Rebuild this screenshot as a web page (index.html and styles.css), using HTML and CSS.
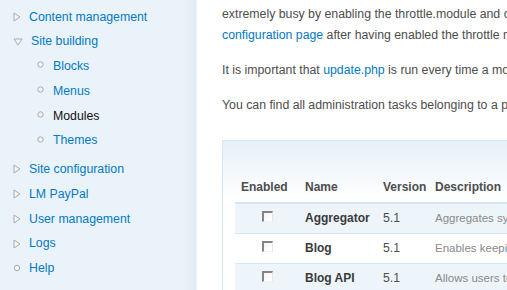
FILE: index.html
```html
<!DOCTYPE html>
<html lang="en">

<head>
    <meta charset="UTF-8">
    <meta name="viewport" content="width=device-width, initial-scale=1.0">
    <link rel="stylesheet" href="styles.css">
</head>

<body>
    <div class="page">
        <aside class="sidebar">
            <ul class="menu">
                <li><a class="item" href="#"><svg class="icon" width="8" height="10" viewBox="0 0 8 10"><polygon points="1,1 7,5 1,9" /></svg>Content management</a></li>
                <li>
                    <a class="item" href="#"><svg class="icon" width="10" height="8" viewBox="0 0 10 8"><polygon points="1,1 9,1 5,7" /></svg>Site building</a>
                    <ul class="menu sub">
                        <li><a class="item" href="#"><svg class="dot" width="7" height="7" viewBox="0 0 7 7"><circle cx="3.5" cy="3.5" r="2.7" /></svg>Blocks</a></li>
                        <li><a class="item" href="#"><svg class="dot" width="7" height="7" viewBox="0 0 7 7"><circle cx="3.5" cy="3.5" r="2.7" /></svg>Menus</a></li>
                        <li><a class="item active" href="#"><svg class="dot" width="7" height="7" viewBox="0 0 7 7"><circle cx="3.5" cy="3.5" r="2.7" /></svg>Modules</a></li>
                        <li><a class="item" href="#"><svg class="dot" width="7" height="7" viewBox="0 0 7 7"><circle cx="3.5" cy="3.5" r="2.7" /></svg>Themes</a></li>
                    </ul>
                </li>
                <li><a class="item" href="#"><svg class="icon" width="8" height="10" viewBox="0 0 8 10"><polygon points="1,1 7,5 1,9" /></svg>Site configuration</a></li>
                <li><a class="item" href="#"><svg class="icon" width="8" height="10" viewBox="0 0 8 10"><polygon points="1,1 7,5 1,9" /></svg>LM PayPal</a></li>
                <li><a class="item" href="#"><svg class="icon" width="8" height="10" viewBox="0 0 8 10"><polygon points="1,1 7,5 1,9" /></svg>User management</a></li>
                <li><a class="item" href="#"><svg class="icon" width="8" height="10" viewBox="0 0 8 10"><polygon points="1,1 7,5 1,9" /></svg>Logs</a></li>
                <li><a class="item" href="#"><svg class="icon" width="8" height="10" viewBox="0 0 8 10"><circle cx="4" cy="5" r="2.7" /></svg>Help</a></li>
            </ul>
        </aside>

        <main class="content">
            <p>Modules can automatically be temporarily disabled to reduce server load when your site becomes<br>
                extremely busy by enabling the throttle.module and checking throttle. The auto-throttle functionality must be configured on the <a href="#">throttle</a><br>
                <a href="#">configuration page</a> after having enabled the throttle module.</p>
            <p>It is important that <a href="#">update.php</a> is run every time a module is updated to a newer version.</p>
            <p>You can find all administration tasks belonging to a particular module on the <a href="#">administration by module page</a>.</p>

            <div class="box">
                <table class="modules">
                    <thead>
                        <tr>
                            <th class="col-enabled">Enabled</th>
                            <th class="col-name">Name</th>
                            <th class="col-version">Version</th>
                            <th>Description</th>
                        </tr>
                    </thead>
                    <tbody>
                        <tr class="odd">
                            <td class="check"><span class="checkbox"></span></td>
                            <td class="name">Aggregator</td>
                            <td>5.1</td>
                            <td class="desc">Aggregates syndicated content (RSS, RDF, and Atom feeds).</td>
                        </tr>
                        <tr class="even">
                            <td class="check"><span class="checkbox"></span></td>
                            <td class="name">Blog</td>
                            <td>5.1</td>
                            <td class="desc">Enables keeping an easily and regularly updated web page or a blog.</td>
                        </tr>
                        <tr class="odd">
                            <td class="check"><span class="checkbox"></span></td>
                            <td class="name">Blog API</td>
                            <td>5.1</td>
                            <td class="desc">Allows users to post content using applications that support XML-RPC blog APIs.</td>
                        </tr>
                    </tbody>
                </table>
            </div>
        </main>
    </div>
</body>

</html>
```

FILE: styles.css
```css
/* Page base */
body {
    margin: 0;
    font-family: "Liberation Sans", Arial, sans-serif;
    font-size: 12.3px;
    color: #4d4d4d;
    background: #fff;
    overflow: hidden;
}

a {
    color: #027ac6;
    text-decoration: none;
}

/* Two columns: sidebar and content */
.page {
    display: flex;
    height: 290px;
    overflow: hidden;
}

.sidebar {
    flex: 0 0 197px;
    background: linear-gradient(to right, #ebf3fa 0, #ebf3fa 185px, #dde9f3 196px, #fff 197px);
    padding-top: 4.5px;
}

/* Navigation menu */
.menu {
    list-style: none;
    margin: 0;
    padding: 0 0 0 13px;
}

.menu li {
    line-height: 24.75px;
}

.menu.sub {
    padding-left: 24px;
    margin-bottom: 4px;
}

.item {
    display: flex;
    align-items: center;
    white-space: nowrap;
}

.item.active {
    color: #111;
}

.icon {
    margin-right: 8px;
    flex: 0 0 auto;
}

.icon polygon,
.icon circle,
.dot circle {
    fill: #f7f7f7;
    stroke: #a9a9a9;
    stroke-width: 1;
}

.dot {
    margin-right: 9px;
    margin-top: -3px;
    flex: 0 0 auto;
}

/* Main content */
.content {
    flex: 0 0 620px;
    padding-left: 25px;
    margin-top: -17.5px;
}

.content p {
    margin: 0 0 14px;
    line-height: 21px;
    white-space: nowrap;
}

/* Box around the table */
.box {
    margin-top: 24px;
    border: 1px solid #d3e7f4;
    background: linear-gradient(to bottom, #e6f0f8 0, #fff 60px);
    padding: 35px 0 0 12px;
}

.modules {
    border-collapse: collapse;
    table-layout: fixed;
    width: 560px;
}

.modules th {
    text-align: left;
    font-weight: bold;
    padding: 2px 6px 6px;
    line-height: 18px;
    border-bottom: 2px solid #d3e7f4;
    font-size: 12px;
}

.col-enabled {
    width: 52px;
}

.col-name {
    width: 66px;
}

.col-version {
    width: 40px;
}

.modules td {
    padding: 6px;
    line-height: 17px;
    white-space: nowrap;
    overflow: hidden;
}

.modules tr.odd td {
    background: #edf5fa;
}

.modules tr.even td {
    background: #fff;
}

.modules tbody tr {
    border-bottom: 1px solid #d3e7f4;
}

.check {
    text-align: center;
}

.name {
    font-weight: bold;
    font-size: 12px;
    color: #3a3a3a;
}

.desc {
    font-size: 11.5px;
    color: #8a8a8a;
}

/* Old style checkbox */
.checkbox {
    display: inline-block;
    vertical-align: middle;
    margin-top: -4px;
    width: 8px;
    height: 8px;
    border-style: solid;
    border-width: 2px 1px 1px 2px;
    border-color: #848484 #e6e6e6 #f2f2f2 #848484;
    background: linear-gradient(135deg, #f4f4f4, #fff);
}
```
